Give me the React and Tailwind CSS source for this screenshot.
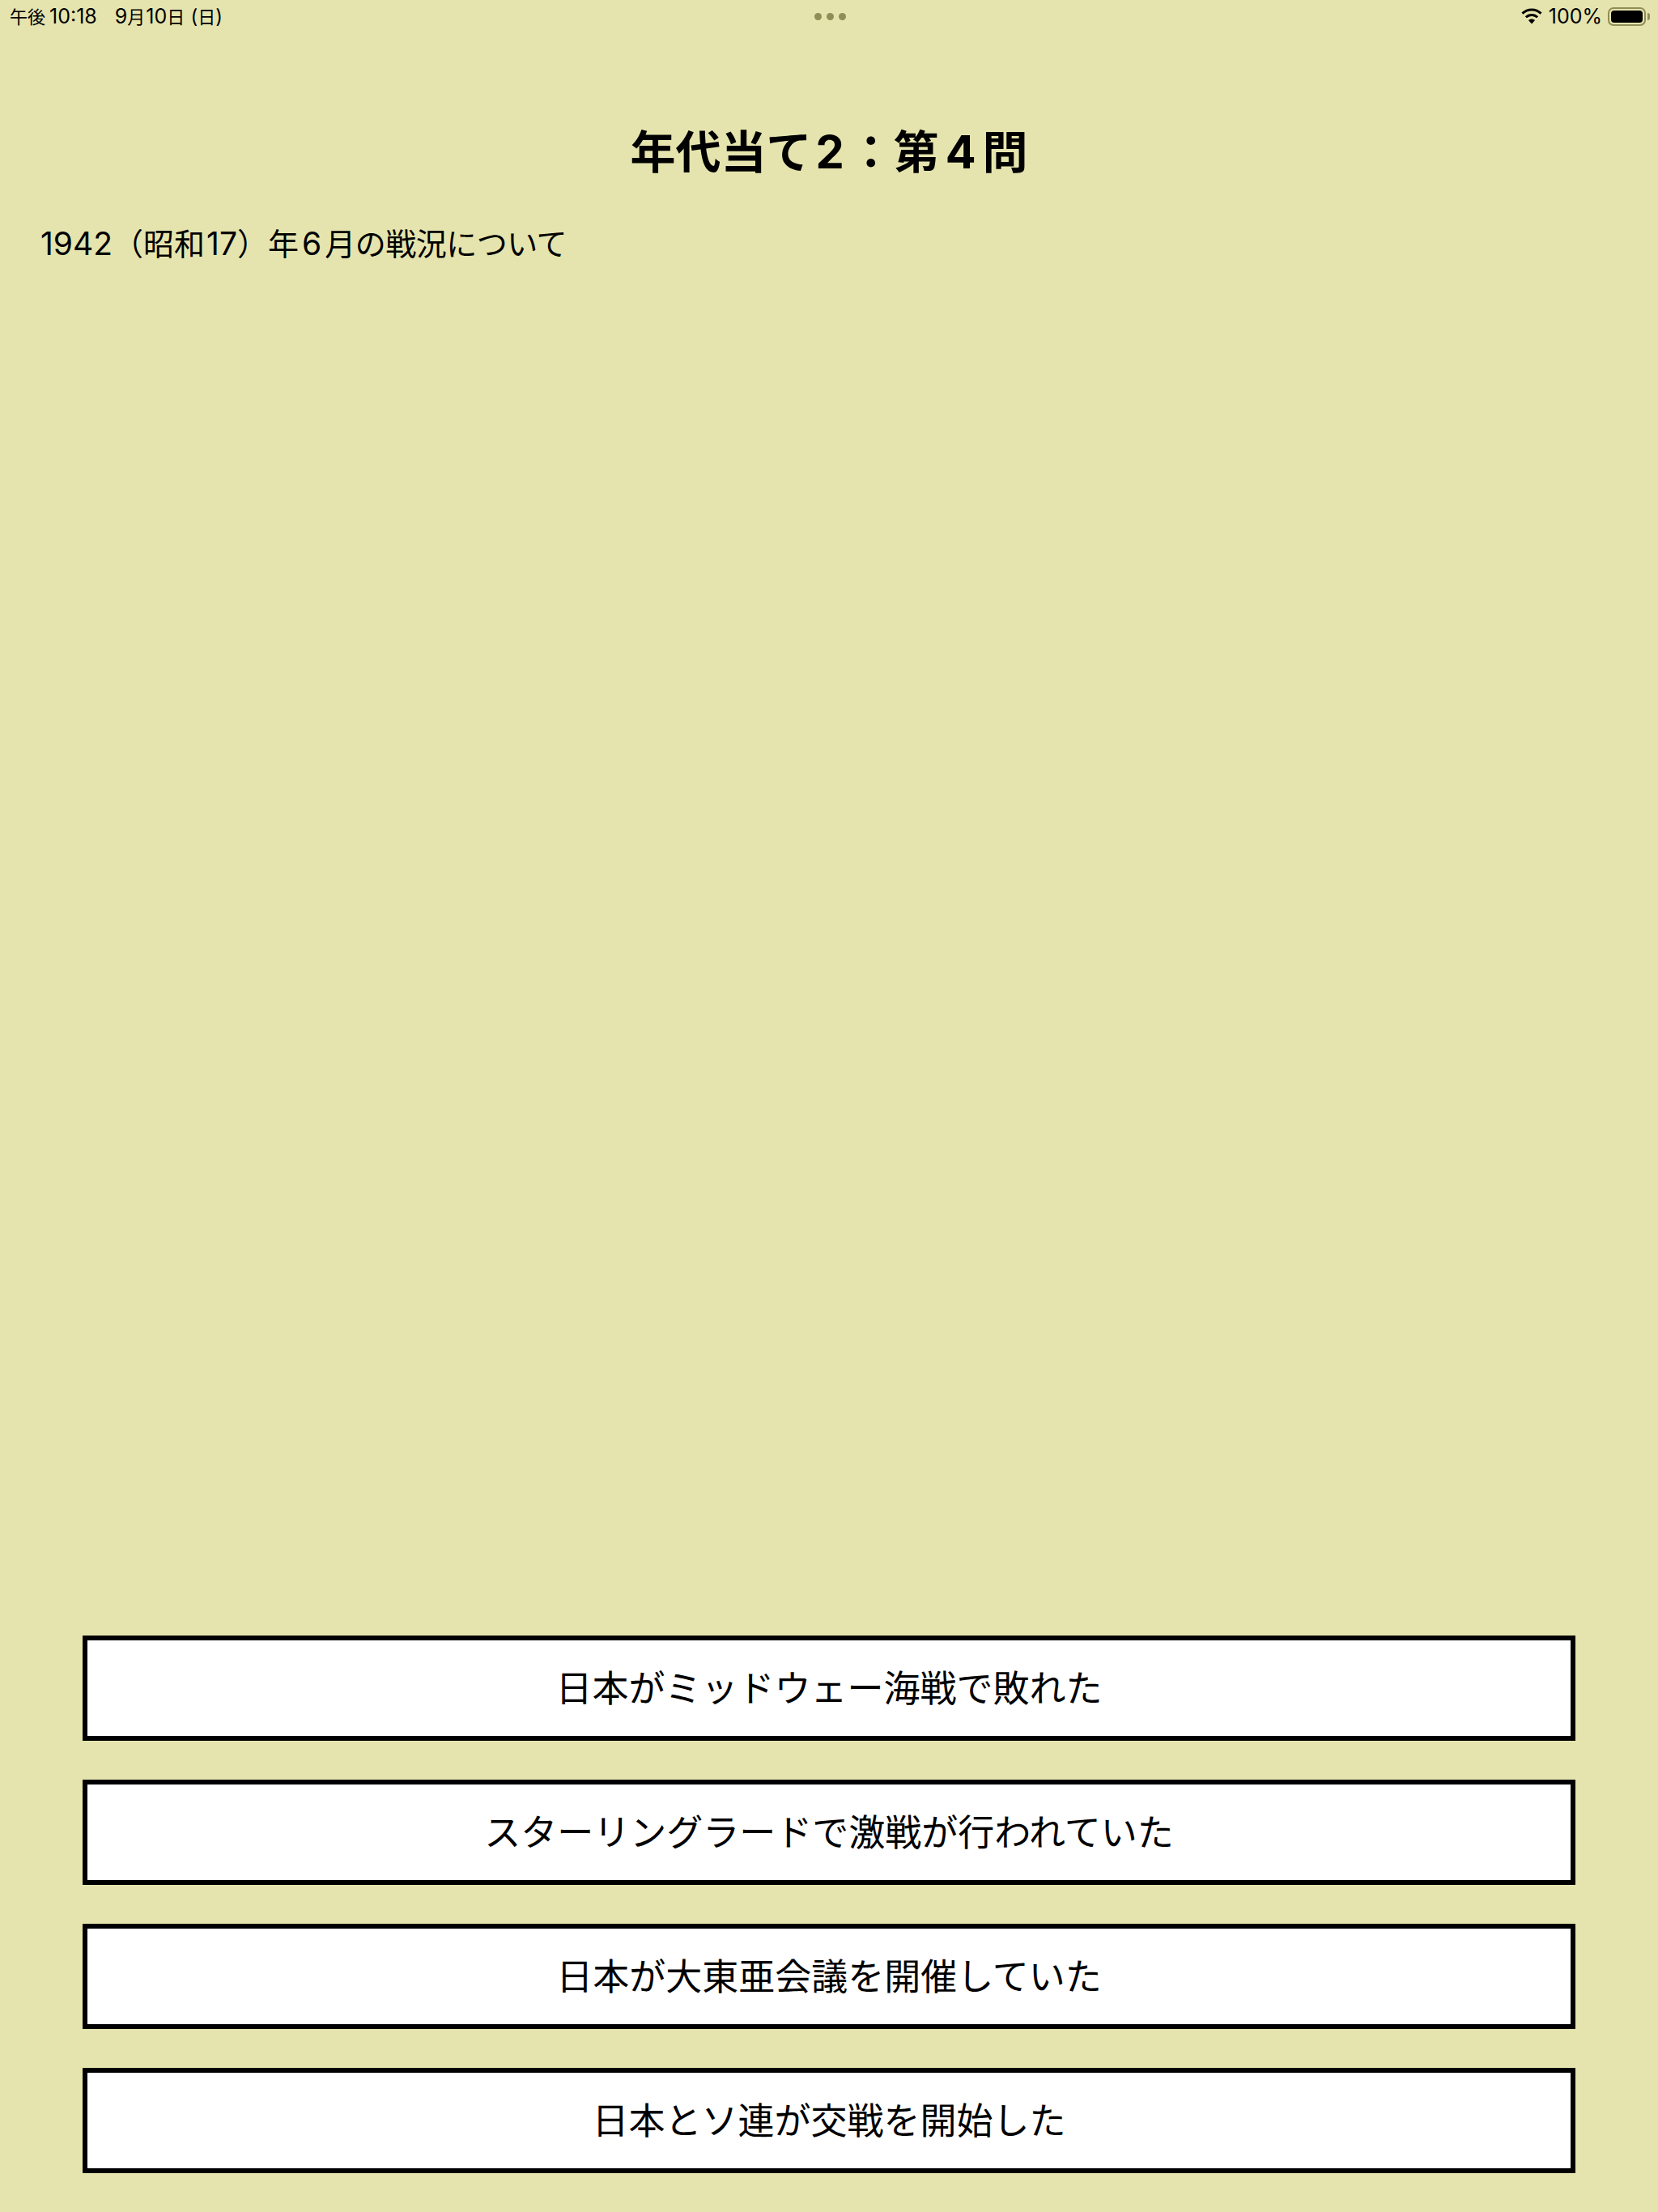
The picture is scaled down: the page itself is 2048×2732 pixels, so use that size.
const font = "font-['Inter','Noto_Sans_CJK_JP',sans-serif]"

const choices = [
  '日本がミッドウェー海戦で敗れた',
  'スターリングラードで激戦が行われていた',
  '日本が大東亜会議を開催していた',
  '日本とソ連が交戦を開始した',
]

const StatusBar = () => {
  return (
    <div className="flex h-10 items-center justify-between pl-3 pr-[10px] text-[22px] leading-none text-black">
      <div className="flex w-[400px] gap-[22px]">
        <span>午後<span className="ml-[5px] text-[25px]">10:18</span></span>
        <span><span className="text-[25px]">9</span>月<span className="ml-[1px] text-[25px]">10</span>日<span className="ml-[1px]"> </span><span className="text-[24px]">(</span>日<span className="text-[24px]">)</span></span>
      </div>
      <div className="flex items-center gap-[6px]">
        <span className="h-[9px] w-[9px] rounded-full bg-[#8f8e56]" />
        <span className="h-[9px] w-[9px] rounded-full bg-[#8f8e56]" />
        <span className="h-[9px] w-[9px] rounded-full bg-[#8f8e56]" />
      </div>
      <div className="flex w-[400px] items-center justify-end gap-[7px]">
        <svg width="28" height="21" viewBox="0 0 28 21" fill="black">
          <path d="M14 3.500c4 0 7.700 1.500 10.600 4.200l2-2.100C23.100 2.200 18.700 0.400 14 0.400S4.900 2.200 1.400 5.600l2 2.100C6.300 5 10 3.500 14 3.500z" />
          <path d="M14 9.900c2.300 0 4.400.9 6.100 2.400l2.100-2.100C20 8.100 17.100 6.900 14 6.900s-6 1.200-8.200 3.300l2.100 2.100c1.700-1.500 3.800-2.400 6.100-2.400z" />
          <path d="M14 13.400c-1.600 0-3 .6-4.100 1.500L14 19.500l4.100-4.600c-1.100-.9-2.500-1.500-4.100-1.500z" />
        </svg>
        <span className="text-[25px]">100%</span>
        <div className="flex items-center gap-[2px]">
          <div className="flex h-[23px] w-[47px] rounded-[7px] border-2 border-[#8f8e56] p-[2px]">
            <div className="h-full w-full rounded-[4px] bg-black" />
          </div>
          <div className="h-[9px] w-[3px] rounded-r-full bg-[#8f8e56]" />
        </div>
      </div>
    </div>
  )
}

export default function App() {
  return (
    <div className={`flex h-[2732px] w-[2048px] flex-col bg-[#e5e4ae] text-black ${font}`}>
      <StatusBar />
      <h1 className="mt-[118px] text-center text-[56px] font-bold leading-[60px]">
        年代当て<span className="mx-[5px]">2</span>：第<span className="mx-[8px]">4</span>問
      </h1>
      <p className="mt-[58px] pl-[50px] text-[38px] leading-[50px]">
        <span className="text-[39px]">1942</span>（昭和<span className="ml-[2px] text-[39px]">17</span>）年<span className="mx-[4px] text-[39px]">6</span><span className="tracking-[-0.5px]">月の戦況について</span>
      </p>
      <div className="mt-auto flex flex-col gap-12 px-[102px] pb-12">
        {choices.map((item) => (
          <button
            key={item}
            className="flex h-[130px] items-center justify-center border-[6px] border-black bg-white text-[45px] leading-none"
          >
            {item}
          </button>
        ))}
      </div>
    </div>
  )
}
